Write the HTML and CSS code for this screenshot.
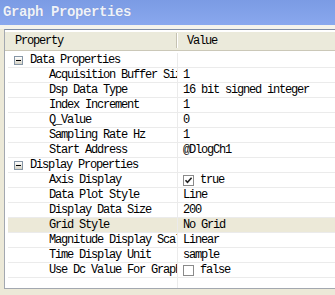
FILE: index.html
```html
<!DOCTYPE html>
<html>
<head>
<meta charset="utf-8">
<link rel="stylesheet" href="styles.css">
</head>
<body>
<div class="titlebar">Graph Properties</div>
<div class="strip"></div>
<div class="grid">
  <div class="head">
    <div class="hname">Property</div>
    <div class="hsep"></div>
    <div class="hval">Value</div>
  </div>
  <div class="rows">
    <div class="row cat"><div class="name"><span class="exp"></span>Data Properties</div><div class="val"></div></div>
    <div class="row"><div class="name">Acquisition Buffer Size</div><div class="val">1</div></div>
    <div class="row"><div class="name">Dsp Data Type</div><div class="val">16 bit signed integer</div></div>
    <div class="row"><div class="name">Index Increment</div><div class="val">1</div></div>
    <div class="row"><div class="name">Q_Value</div><div class="val">0</div></div>
    <div class="row"><div class="name">Sampling Rate Hz</div><div class="val">1</div></div>
    <div class="row"><div class="name">Start Address</div><div class="val">@DlogCh1</div></div>
    <div class="row cat"><div class="name"><span class="exp"></span>Display Properties</div><div class="val"></div></div>
    <div class="row"><div class="name">Axis Display</div><div class="val"><span class="cb"><svg width="9" height="9" viewBox="0 0 9 9"><path d="M1.5 4.2 L3.5 6.4 L7.6 1.8" fill="none" stroke="#222" stroke-width="1.6"/></svg></span>true</div></div>
    <div class="row"><div class="name">Data Plot Style</div><div class="val">Line</div></div>
    <div class="row"><div class="name">Display Data Size</div><div class="val">200</div></div>
    <div class="row sel"><div class="name">Grid Style</div><div class="val">No Grid</div></div>
    <div class="row"><div class="name">Magnitude Display Scale</div><div class="val">Linear</div></div>
    <div class="row"><div class="name">Time Display Unit</div><div class="val">sample</div></div>
    <div class="row"><div class="name">Use Dc Value For Graph</div><div class="val"><span class="cb"></span>false</div></div>
    <div class="row fill"><div class="name"></div><div class="val"></div></div>
  </div>
</div>
</body>
</html>
```
FILE: styles.css
```css
html, body {
  margin: 0;
  height: 100%;
  overflow: hidden;
  background: #ece9d8;
}
body {
  font-family: "Liberation Mono", "DejaVu Sans Mono", monospace;
  font-size: 12px;
  letter-spacing: -1.2px;
  color: #000;
}
.titlebar {
  height: 25px;
  line-height: 25px;
  padding-left: 3px;
  background: linear-gradient(#7b9be4, #89a8ee);
  font-size: 14px;
  font-weight: bold;
  letter-spacing: -0.4px;
  color: #eef2fa;
  text-shadow: 0 0 1px #6c84c0;
  white-space: nowrap;
}
.strip {
  height: 4px;
  background: #f4f3ec;
}
.grid {
  margin-left: 4px;
  height: 258px;
  border-left: 1px solid #a3a8b0;
  border-top: 1px solid #7f8da5;
  border-bottom: 1px solid #a3a8b0;
  background: #fff;
  display: flex;
  flex-direction: column;
}
.head {
  box-sizing: border-box;
  height: 21px;
  border-top: 2px solid #fff;
  border-bottom: 1px solid #cbc8b8;
  background: #ebeadb;
  display: flex;
  align-items: stretch;
  line-height: 18px;
}
.hname {
  width: 161px;
  padding-left: 10px;
}
.hsep {
  width: 1px;
  margin: 1px 0 2px;
  border-right: 1px solid #fff;
  background: #c5c2b2;
}
.hval {
  padding-left: 9px;
}
.rows {
  flex: 1;
  padding-top: 2px;
  display: flex;
  flex-direction: column;
}
.row {
  display: flex;
  box-sizing: border-box;
  height: 15px;
  margin-left: 3px;
  border-bottom: 1px solid #ebebeb;
  line-height: 14px;
}
.row.sel {
  background: #ece9d8;
}
.row.fill {
  flex: 1;
  border-bottom: none;
}
.name {
  box-sizing: border-box;
  width: 169px;
  padding-left: 41px;
  overflow: hidden;
  white-space: nowrap;
  flex: none;
}
.cat .name {
  padding-left: 6px;
  display: flex;
  align-items: center;
}
.val {
  flex: 1;
  border-left: 1px solid #ebebeb;
  padding-left: 5px;
  white-space: nowrap;
  display: flex;
  align-items: center;
}
.exp {
  box-sizing: border-box;
  width: 9px;
  height: 9px;
  margin-right: 7px;
  border: 1px solid #8595a5;
  background: linear-gradient(#ffffff, #d6d3c6);
  position: relative;
  flex: none;
}
.exp::after {
  content: "";
  position: absolute;
  left: 1px;
  top: 3px;
  width: 5px;
  height: 1px;
  background: #000;
}
.cb {
  box-sizing: border-box;
  width: 11px;
  height: 11px;
  margin-right: 6px;
  border: 1px solid #8a8a8a;
  background: #fff;
  display: inline-flex;
  align-items: center;
  justify-content: center;
  flex: none;
}
.cb svg {
  display: block;
}
```
